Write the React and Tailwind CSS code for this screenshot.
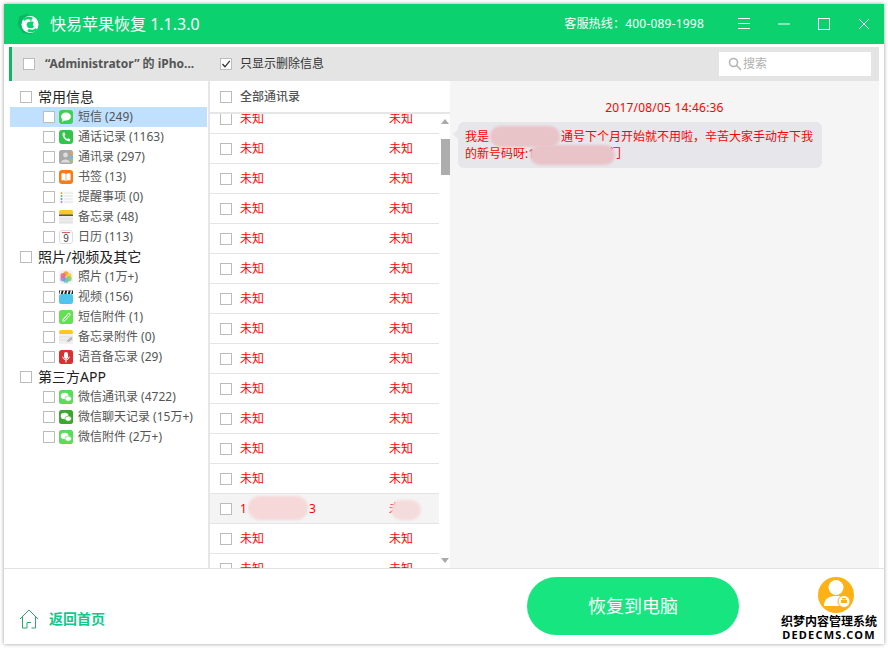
import React from 'react';

const font = { fontFamily: '"Noto Sans", "Noto Sans CJK SC", sans-serif' };

function Check({ checked }) {
  return (
    <span className="w-[12px] h-[12px] shrink-0 border border-[#bcbcbc] bg-white flex items-center justify-center">
      {checked && (
        <svg width="10" height="10" viewBox="0 0 10 10" fill="none" stroke="#333" strokeWidth="1.3">
          <path d="M1.5 5 L4 7.8 L8.8 1.8" />
        </svg>
      )}
    </span>
  );
}

function ItemIcon({ name }) {
  const box = { width: 14, height: 14, viewBox: '0 0 14 14' };
  if (name === 'sms') return (
    <svg {...box}><rect width="14" height="14" rx="3" fill="#3fd04f" /><ellipse cx="7" cy="6.5" rx="5" ry="4" fill="#fff" /><path d="M3.5 9 L3 12 L6.5 10 Z" fill="#fff" /></svg>
  );
  if (name === 'call') return (
    <svg {...box}><rect width="14" height="14" rx="3" fill="#2fc74a" /><path d="M4 2.5 C3 4 3.5 6.5 5.2 8.6 C7 10.8 9.4 11.8 11 11 L11.4 9.6 L9.3 8.2 L8.2 9 C7 8.4 5.8 7 5.4 5.7 L6.4 4.8 L5.4 2.4 Z" fill="#fff" /></svg>
  );
  if (name === 'contacts') return (
    <svg {...box}><rect width="14" height="14" rx="2.5" fill="#a9a9a9" /><rect x="12" y="2" width="2" height="3.5" fill="#f0a040" /><rect x="12" y="5.5" width="2" height="3.5" fill="#5fc0ee" /><rect x="12" y="9" width="2" height="3" fill="#9ad050" /><circle cx="6.5" cy="5" r="2.4" fill="#ddd" /><path d="M2 12.5 C2.5 8.5 10.5 8.5 11 12.5 Z" fill="#ddd" /></svg>
  );
  if (name === 'book') return (
    <svg {...box}><rect width="14" height="14" rx="3" fill="#f57c1a" /><path d="M2.5 3.5 C4 3 6 3 6.7 4 L6.7 11 C6 10 4 10 2.5 10.5 Z M11.5 3.5 C10 3 8 3 7.3 4 L7.3 11 C8 10 10 10 11.5 10.5 Z" fill="#fff" /></svg>
  );
  if (name === 'remind') return (
    <svg {...box}><rect width="14" height="14" rx="2" fill="#fafafa" /><circle cx="2.5" cy="3" r="1" fill="#f6a030" /><circle cx="2.5" cy="6" r="1" fill="#5ac05a" /><circle cx="2.5" cy="9" r="1" fill="#4a9af0" /><circle cx="2.5" cy="12" r="1" fill="#c070e0" /><path d="M5 3 H14 M5 6 H14 M5 9 H14 M5 12 H14" stroke="#e4e4e4" /></svg>
  );
  if (name === 'notes') return (
    <svg {...box}><rect y="0" width="14" height="5" rx="2" fill="#fdc81e" /><rect y="4.5" width="14" height="1.5" fill="#555" /><rect y="6" width="14" height="8" fill="#eee" /><path d="M0 9 H14 M0 12 H14" stroke="#ddd" /></svg>
  );
  if (name === 'cal') return (
    <svg {...box}><rect x=".5" y=".5" width="13" height="13" rx="2.5" fill="#fff" stroke="#ddd" /><path d="M3 2.6 H11" stroke="#e05050" /><text x="7" y="12.2" textAnchor="middle" fontSize="10" fill="#444" fontFamily="Liberation Sans">9</text></svg>
  );
  if (name === 'photos') return (
    <svg {...box}>
      <rect width="14" height="14" rx="3" fill="#f2f2f2" />
      <circle cx="7" cy="3.9" r="2.6" fill="#f7a23b" />
      <circle cx="10" cy="5.5" r="2.6" fill="#f2d33c" opacity=".9" />
      <circle cx="10" cy="8.7" r="2.6" fill="#8fd05a" opacity=".9" />
      <circle cx="7" cy="10.2" r="2.6" fill="#5bc8c0" opacity=".9" />
      <circle cx="4" cy="8.7" r="2.6" fill="#8a8ce8" opacity=".9" />
      <circle cx="4" cy="5.5" r="2.6" fill="#ec6a8a" opacity=".9" />
    </svg>
  );
  if (name === 'video') return (
    <svg {...box}><rect y="4" width="14" height="10" rx="2" fill="#4fc4ee" /><rect y="0.5" width="14" height="3.5" fill="#222" /><path d="M2 .5 L1 4 M5.5 .5 L4.5 4 M9 .5 L8 4 M12.5 .5 L11.5 4" stroke="#fff" strokeWidth="1.4" /></svg>
  );
  if (name === 'clip') return (
    <svg {...box}><rect width="14" height="14" rx="2.5" fill="#63e24f" /><path d="M4 9.5 L9 3.8 C10.5 2.4 12 4 10.7 5.4 L5.6 11 C4.6 12 3.2 10.8 4.2 9.6 L8.6 4.8" fill="none" stroke="#fff" strokeWidth="1" /></svg>
  );
  if (name === 'noteclip') return (
    <svg {...box}><rect width="14" height="4.5" rx="2" fill="#fdc81e" /><rect y="4" width="14" height="10" fill="#f0f0f0" /><path d="M0 7 H14 M0 10 H14" stroke="#ddd" /><path d="M8 11.5 L11.5 8 C12.5 7 13 8.4 12.4 9 L9.4 12" fill="none" stroke="#999" /></svg>
  );
  if (name === 'voice') return (
    <svg {...box}><rect width="14" height="14" rx="2.5" fill="#dc2f2f" /><rect x="5" y="2" width="4" height="7" rx="2" fill="#fff" /><path d="M3.8 6.5 C3.8 11 10.2 11 10.2 6.5 M7 10 V12.5" fill="none" stroke="#fff" /></svg>
  );
  const bg = name === 'wechat2' ? '#3aa82f' : '#58dd58';
  return (
    <svg {...box}><rect width="14" height="14" rx="2.5" fill={bg} /><ellipse cx="5.6" cy="6" rx="3.9" ry="3.2" fill="#fff" /><ellipse cx="9.2" cy="8.6" rx="3.2" ry="2.6" fill="#fff" stroke={bg} strokeWidth=".6" /></svg>
  );
}

const tree = [
  { title: '常用信息', items: [
    ['sms', '短信 (249)', true], ['call', '通话记录 (1163)'], ['contacts', '通讯录 (297)'], ['book', '书签 (13)'],
    ['remind', '提醒事项 (0)'], ['notes', '备忘录 (48)'], ['cal', '日历 (113)'],
  ] },
  { title: '照片/视频及其它', items: [
    ['photos', '照片 (1万+)'], ['video', '视频 (156)'], ['clip', '短信附件 (1)'], ['noteclip', '备忘录附件 (0)'], ['voice', '语音备忘录 (29)'],
  ] },
  { title: '第三方APP', items: [
    ['wechat', '微信通讯录 (4722)'], ['wechat2', '微信聊天记录 (15万+)'], ['wechat', '微信附件 (2万+)'],
  ] },
];

const rows = Array.from({ length: 16 }, (_, i) => i);

export default function App() {
  return (
    <div className="w-[888px] h-[648px] p-[4px] bg-white" style={font}>
      <div className="relative w-[880px] h-[640px] bg-white flex flex-col shadow-[0_0_4px_rgba(0,0,0,0.4)]">
        {/* title bar */}
        <div className="h-[40px] shrink-0 bg-[#0bd26f] flex items-center text-white">
          <svg className="ml-[12px]" width="24" height="24" viewBox="0 0 24 24">
            <path d="M12 1.5 L3 4.5 L1.5 13 L7 21 L16 22.5 Z" fill="#0ab765" />
            <circle cx="14" cy="12.5" r="8.5" fill="#fff" />
            <path d="M7 7 C10 4.5 14 4 17 6 L15 8 C13 6.8 10 7 8 9 Z" fill="#0bd26f" />
            <path d="M21 18 C18 20.5 14 21 11 19 L13 17 C15 18.2 18 18 20 16 Z" fill="#0bd26f" />
            <path d="M14 10 C15.5 9 17.5 9.7 17.8 10.6 C16.4 11.6 16.6 13.6 18 14.2 C17.4 16 16 16.6 14.2 16 C12.8 16.6 11 15.2 10.6 13 C10.4 10.6 12.4 9.2 14 10 Z" fill="#0bd26f" />
            <path d="M14 9.5 C14 8.5 14.8 7.8 15.8 7.6 C15.9 8.6 15.2 9.4 14 9.5 Z" fill="#0bd26f" />
          </svg>
          <span className="ml-[10px] text-[16px] whitespace-nowrap">快易苹果恢复 1.1.3.0</span>
          <span className="ml-auto text-[12px] tracking-[0.2px] whitespace-nowrap">客服热线：400-089-1998</span>
          <svg className="ml-[34px]" width="12" height="12" viewBox="0 0 12 12" stroke="#fff" fill="none"><path d="M0 .5 H12 M0 5.5 H12 M0 10.5 H12" /></svg>
          <svg className="ml-[28px]" width="12" height="12" viewBox="0 0 12 12" stroke="#fff" fill="none"><path d="M0 6 H12" /></svg>
          <svg className="ml-[28px]" width="12" height="12" viewBox="0 0 12 12" stroke="#fff" fill="none"><rect x=".5" y=".5" width="11" height="11" /></svg>
          <svg className="ml-[28px] mr-[14px]" width="12" height="12" viewBox="0 0 12 12" stroke="#fff" fill="none"><path d="M1 1 L11 11 M11 1 L1 11" /></svg>
        </div>

        {/* toolbar */}
        <div className="mx-[5px] mt-[3px] h-[34px] shrink-0 bg-[#e4e4e4] border-l-[3px] border-[#0cb763] flex items-center">
          <span className="ml-[11px]"><Check /></span>
          <span className="ml-[10px] w-[175px] text-[12px] font-bold text-[#555] whitespace-nowrap">“Administrator” 的 iPho...</span>
          <Check checked />
          <span className="ml-[8px] text-[12px] text-[#333]">只显示删除信息</span>
          <div className="ml-auto mr-[8px] w-[152px] h-[24px] bg-white flex items-center pl-[9px] text-[12px] text-[#b0b0b0]">
            <svg width="14" height="14" viewBox="0 0 14 14" fill="none" stroke="#b5b5b5" strokeWidth="1.6"><circle cx="5.5" cy="5.5" r="4" /><path d="M8.5 8.5 L13 13" /></svg>
            <span className="ml-[1px]">搜索</span>
          </div>
        </div>

        {/* main */}
        <div className="mx-[5px] flex flex-1 min-h-0">
          <div className="w-[201px] shrink-0 border-r-2 border-[#e6e6e6] pt-[6px] pl-px pr-px">
            {tree.map(group => (
              <div key={group.title}>
                <div className="h-[20px] flex items-center pl-[10px] text-[14px] leading-[18px] text-[#222]">
                  <Check />
                  <span className="ml-[6px] -mt-[1px]">{group.title}</span>
                </div>
                {group.items.map(([icon, label, active]) => (
                  <div key={label} className={active ? 'h-[20px] flex items-center pl-[33px] text-[12px] text-[#555] bg-[#bfe0ff]' : 'h-[20px] flex items-center pl-[33px] text-[12px] text-[#555]'}>
                    <Check />
                    <span className="ml-[4px] flex"><ItemIcon name={icon} /></span>
                    <span className="ml-[5px] whitespace-nowrap">{label}</span>
                  </div>
                ))}
              </div>
            ))}
          </div>

          <div className="w-[240px] shrink-0 flex flex-col min-h-0">
            <div className="h-[33px] shrink-0 border-b-2 border-[#e6e6e6] flex items-center pl-[10px]">
              <Check />
              <span className="ml-[8px] text-[12px] font-medium text-[#555]">全部通讯录</span>
            </div>
            <div className="flex flex-1 min-h-0">
              <div className="w-[229px] overflow-hidden">
                <div className="-mt-[10px]">
                  {rows.map(i => (
                    <div key={i} className={i === 13 ? 'relative h-[30px] border-b border-[#e4e4e4] bg-[#f4f4f4] flex items-center pl-[10px] text-[12px] text-[#f00]' : 'h-[30px] border-b border-[#e4e4e4] flex items-center pl-[10px] text-[12px] text-[#f00]'}>
                      <Check />
                      {i === 13 ? (
                        <>
                          <span className="ml-[8px] w-[149px]"><span>1</span><span className="ml-[62px]">3</span></span>
                          <span>未</span>
                          <span className="absolute left-[38px] top-[2px] w-[60px] h-[24px] rounded-full bg-[#f6d8d8] blur-[1px]" />
                          <span className="absolute left-[181px] top-[6px] w-[30px] h-[20px] rounded-full bg-[#f5dcdc] blur-[1px]" />
                        </>
                      ) : (
                        <>
                          <span className="ml-[8px] w-[149px]">未知</span>
                          <span>未知</span>
                        </>
                      )}
                    </div>
                  ))}
                </div>
              </div>
              <div className="w-[11px] flex flex-col items-end">
                <svg className="mt-[5px] mr-px" width="8" height="5" viewBox="0 0 8 5"><path d="M4 0 L8 5 H0 Z" fill="#aaa" /></svg>
                <div className="mt-[15px] w-[9px] h-[36px] bg-[#adadad]" />
                <svg className="mt-auto mb-[5px] mr-px" width="8" height="5" viewBox="0 0 8 5"><path d="M0 0 H8 L4 5 Z" fill="#aaa" /></svg>
              </div>
            </div>
          </div>

          <div className="flex-1 bg-[#f5f5f5] pt-[19px]">
            <div className="text-center text-[12px] leading-[16px] tracking-[0.2px] text-[#f00]">2017/08/05 14:46:36</div>
            <div className="relative mt-[6px] ml-[8px] w-[364px] h-[46px] rounded-[6px] bg-[#e6e6eb] px-[7px] py-[6px] text-[12px] leading-[17px] text-[#f00] whitespace-nowrap">
              <span className="absolute -left-[5px] top-[7px] w-0 h-0 border-y-[5px] border-y-transparent border-r-[5px] border-r-[#e6e6eb]" />
              <div>我是<span className="ml-[72px]">通号下个月开始就不用啦，辛苦大家手动存下我</span></div>
              <div>的新号码呀:1<span className="ml-[74px]">门</span></div>
              <span className="absolute left-[32px] top-[4px] w-[70px] h-[21px] rounded-full bg-[#e8c4c9] blur-[1px]" />
              <span className="absolute left-[72px] top-[23px] w-[85px] h-[20px] rounded-full bg-[#e8c4c9] blur-[1px]" />
            </div>
          </div>
        </div>

        {/* bottom bar */}
        <div className="h-[76px] shrink-0 border-t border-[#e2e2e2] flex items-start pt-[8px]">
          <div className="mt-[31px] ml-[15px] w-[100px] flex items-center">
            <svg width="20" height="20" viewBox="0 0 20 20" fill="none" stroke="#2aa96a" strokeWidth="1">
              <path d="M1 10 L10 1 L19 10 M3.5 8 V19 H8 V13.5 H12 M16.5 8 V19 H12.5" />
            </svg>
            <span className="ml-[10px] text-[14px] font-bold text-[#10c98a] whitespace-nowrap">返回首页</span>
          </div>
          <button className="ml-[408px] w-[212px] h-[58px] rounded-full bg-[#17e57f] text-white text-[18px]">恢复到电脑</button>
          <svg className="ml-[79px]" width="36" height="36" viewBox="0 0 36 36">
            <circle cx="18" cy="18" r="18" fill="#fdb115" />
            <circle cx="18" cy="10.5" r="7.5" fill="#fff" />
            <path d="M6 29 C6 21 12 19 18 19 C24 19 30 21 30 29 Z" fill="#fff" />
            <circle cx="26" cy="24.5" r="6" fill="#fff" stroke="#fdb115" />
            <rect x="23" y="23" width="6" height="3" fill="#fdb115" />
            <rect x="24" y="21" width="4" height="1.5" fill="#fdb115" />
          </svg>
        </div>

        {/* watermark */}
        <div className="absolute left-[775px] top-[611px] w-[100px] text-black font-bold text-center leading-[13px] [text-shadow:1px_0_#fff,-1px_0_#fff,0_1px_#fff,0_-1px_#fff]">
          <div className="text-[12px] whitespace-nowrap">织梦内容管理系统</div>
          <div className="text-[11px] tracking-[1.2px] whitespace-nowrap">DEDECMS.COM</div>
        </div>
      </div>
    </div>
  );
}
